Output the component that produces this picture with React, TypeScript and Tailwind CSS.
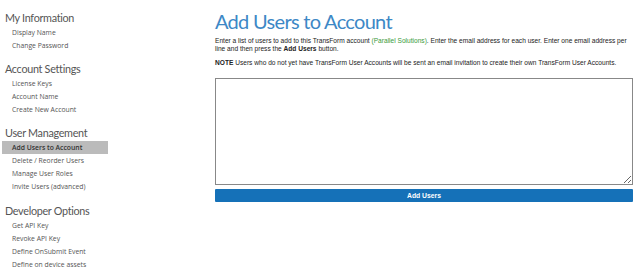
import React from "react";

const sections: { title: string; items: string[] }[] = [
  { title: "My Information", items: ["Display Name", "Change Password"] },
  { title: "Account Settings", items: ["License Keys", "Account Name", "Create New Account"] },
  {
    title: "User Management",
    items: ["Add Users to Account", "Delete / Reorder Users", "Manage User Roles", "Invite Users (advanced)"],
  },
  {
    title: "Developer Options",
    items: ["Get API Key", "Revoke API Key", "Define OnSubmit Event", "Define on device assets"],
  },
];

export default function App() {
  return (
    <div className="flex w-[640px] h-[276px] bg-white overflow-hidden">
      <div className="w-[215px] shrink-0 pl-[2px] pt-[10px]">
        <div className="w-[106px] flex flex-col gap-[9px]">
          {sections.map((s, i) => (
            <div key={s.title} className={i === 3 ? "mt-[1px]" : ""}>
              <div className="h-[16px] leading-[16px] pl-[3px] text-[10.8px] tracking-[-0.3px] text-[#555] font-['Lato',sans-serif]">
                {s.title}
              </div>
              {s.items.map((it) => (
                <div
                  key={it}
                  className={
                    "h-[13px] leading-[13px] pl-[10px] text-[6.8px] font-['Open_Sans',sans-serif] " +
                    (it === "Add Users to Account" ? "bg-[#bbbbbb] text-[#333] font-semibold" : "text-[#555]")
                  }
                >
                  {it}
                </div>
              ))}
            </div>
          ))}
        </div>
      </div>
      <div className="flex-1 pr-[7px] pt-[8px] font-['Liberation_Sans',Arial,sans-serif]">
        <h1 className="font-['Lato',sans-serif] text-[20px] tracking-[-0.7px] leading-[26px] text-[#3d88c6]">
          Add Users to Account
        </h1>
        <p className="mt-[3px] text-[6.6px] leading-[8px] text-[#222]">
          Enter a list of users to add to this TransForm account{" "}
          <span className="text-[#3a9a3a]">(Parallel Solutions)</span>. Enter the email address for each user. Enter one
          email address per line and then press the <b>Add Users</b> button.
        </p>
        <p className="mt-[6px] text-[6.6px] leading-[8px] text-[#222]">
          <b>NOTE</b> Users who do not yet have TransForm User Accounts will be sent an email invitation to create their
          own TransForm User Accounts.
        </p>
        <textarea className="block mt-[11px] w-full h-[107px] border border-[#888] bg-white resize-y" />
        <button className="block mt-[4px] w-full h-[13px] bg-[#1571b8] text-white text-[6.8px] font-bold leading-[13px] rounded-[1px]">
          Add Users
        </button>
      </div>
    </div>
  );
}
